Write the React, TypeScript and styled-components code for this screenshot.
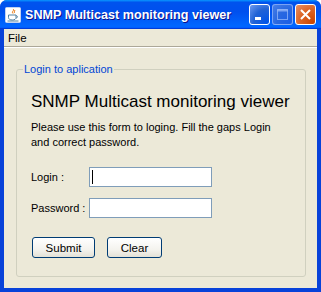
import styled, { createGlobalStyle } from "styled-components";

const GlobalStyle = createGlobalStyle`
  html, body {
    margin: 0;
    padding: 0;
    background: #fff;
  }
  * {
    box-sizing: border-box;
  }
`;

const Window = styled.div`
  width: 321px;
  height: 292px;
  display: flex;
  flex-direction: column;
  background: #0842d9;
  border-radius: 7px 7px 0 0;
  overflow: hidden;
  font-family: "Liberation Sans", Arial, sans-serif;
`;

const TitleBar = styled.div`
  height: 29px;
  flex: none;
  display: flex;
  align-items: center;
  padding: 0 5px 0 5px;
  gap: 3px;
  background: linear-gradient(
    180deg,
    #0997ff 0%,
    #0053ee 8%,
    #0050ee 40%,
    #0066ff 88%,
    #0066ff 93%,
    #005bff 95%,
    #003dd7 96%,
    #003dd7 100%
  );
`;

const Title = styled.span`
  flex: 1;
  color: #fff;
  font-weight: bold;
  font-size: 12.6px;
  padding-left: 1px;
  text-shadow: 1px 1px 0 #0f1089;
  white-space: nowrap;
`;

const Controls = styled.div`
  display: flex;
  gap: 2px;
`;

const ControlButton = styled.div<{ $kind: "min" | "max" | "close" }>`
  width: 21px;
  height: 21px;
  border-radius: 3px;
  border: 1px solid
    ${(p) => (p.$kind === "max" ? "rgba(180,205,255,0.6)" : "#fff")};
  display: flex;
  align-items: center;
  justify-content: center;
  background: ${(p) =>
    p.$kind === "close"
      ? "radial-gradient(circle at 90% 90%, #cc4600 0%, #dc6527 55%, #e5926a 100%)"
      : p.$kind === "max"
      ? "radial-gradient(circle at 90% 90%, #1c5fe6 0%, #2a68e0 55%, #4a80e8 100%)"
      : "radial-gradient(circle at 90% 90%, #0054e9 0%, #2263d5 55%, #6f9bf0 100%)"};
`;

const Frame = styled.div`
  flex: 1;
  margin: 0 4px 4px 4px;
  background: #ece9d8;
  display: flex;
  flex-direction: column;
`;

const MenuBar = styled.div`
  height: 18px;
  flex: none;
  display: flex;
  align-items: center;
  padding-left: 4px;
  font-size: 11.5px;
  color: #000;
  border-bottom: 1px solid #aca899;
  box-shadow: 0 1px 0 #fff;
`;

const Group = styled.fieldset`
  flex: 1;
  margin: 16px 11px 11px 12px;
  padding: 9px 14px 0 14px;
  border: 1px solid #d0d0bf;
  border-radius: 3px;
  display: flex;
  flex-direction: column;
  min-width: 0;
`;

const Legend = styled.legend`
  color: #0046d5;
  font-size: 11px;
  padding: 0 1px;
  margin-left: -8px;
`;

const Heading = styled.div`
  font-size: 17px;
  color: #000;
  margin-top: 8px;
  white-space: nowrap;
`;

const Info = styled.p`
  font-size: 11px;
  line-height: 15px;
  margin: 8px 0 0 0;
  color: #000;
  white-space: nowrap;
`;

const Form = styled.div`
  display: grid;
  grid-template-columns: 58px 123px;
  row-gap: 11px;
  align-items: center;
  margin-top: 17px;
`;

const Label = styled.label`
  font-size: 11px;
  color: #000;
  white-space: nowrap;
`;

const Field = styled.div<{ $focused?: boolean }>`
  height: 20px;
  background: #fff;
  border: 1px solid #7f9db9;
  display: flex;
  align-items: center;
  padding-left: 2px;

  &::before {
    content: "";
    display: ${(p) => (p.$focused ? "block" : "none")};
    width: 1px;
    height: 14px;
    background: #000;
  }
`;

const Buttons = styled.div`
  display: flex;
  gap: 12px;
  margin-top: 19px;
  padding-left: 1px;
`;

const Button = styled.div<{ $w: number }>`
  width: ${(p) => p.$w}px;
  height: 21px;
  border: 1px solid #003c74;
  border-radius: 3px;
  background: linear-gradient(180deg, #fff 0%, #f4f3ee 60%, #e3e1d6 100%);
  display: flex;
  align-items: center;
  justify-content: center;
  font-size: 11.5px;
  color: #000;
`;

const JavaIcon = () => (
  <svg width="16" height="16" viewBox="0 0 16 16">
    <rect x="0.5" y="0.5" width="15" height="15" rx="1" fill="#fff" stroke="#c4d3f0" />
    <path d="M8 2c2 1.5-2 2.5 0 4.5M9.5 3c1 1-1 1.8 0 3" stroke="#e76f00" strokeWidth="1" fill="none" />
    <path d="M3.5 8h7.5v2.5c0 1.5-1.5 2.5-3.75 2.5S3.5 12 3.5 10.5z" fill="none" stroke="#5382a1" strokeWidth="1" />
    <path d="M11 8.7c2 0 2 2.2 0 2.2" fill="none" stroke="#5382a1" strokeWidth="1" />
    <path d="M2.5 14h11" stroke="#5382a1" strokeWidth="1" />
  </svg>
);

export default function App() {
  return (
    <>
      <GlobalStyle />
      <Window>
        <TitleBar>
          <JavaIcon />
          <Title>SNMP Multicast monitoring viewer</Title>
          <Controls>
            <ControlButton $kind="min">
              <svg width="19" height="19" viewBox="0 0 19 19">
                <rect x="5" y="12" width="6" height="3" fill="#fff" />
              </svg>
            </ControlButton>
            <ControlButton $kind="max">
              <svg width="19" height="19" viewBox="0 0 19 19">
                <rect x="4.5" y="4.5" width="10" height="10" fill="none" stroke="rgba(180,205,255,0.6)" />
                <rect x="4.5" y="4.5" width="10" height="2" fill="rgba(180,205,255,0.6)" />
              </svg>
            </ControlButton>
            <ControlButton $kind="close">
              <svg width="19" height="19" viewBox="0 0 19 19">
                <path d="M5 5l9 9M14 5l-9 9" stroke="#fff" strokeWidth="2" />
              </svg>
            </ControlButton>
          </Controls>
        </TitleBar>
        <Frame>
          <MenuBar>File</MenuBar>
          <Group>
            <Legend>Login to aplication</Legend>
            <Heading>SNMP Multicast monitoring viewer</Heading>
            <Info>
              Please use this form to loging. Fill the gaps Login
              <br />
              and correct password.
            </Info>
            <Form>
              <Label>Login :</Label>
              <Field $focused />
              <Label>Password :</Label>
              <Field />
            </Form>
            <Buttons>
              <Button $w={63}>Submit</Button>
              <Button $w={55}>Clear</Button>
            </Buttons>
          </Group>
        </Frame>
      </Window>
    </>
  );
}
